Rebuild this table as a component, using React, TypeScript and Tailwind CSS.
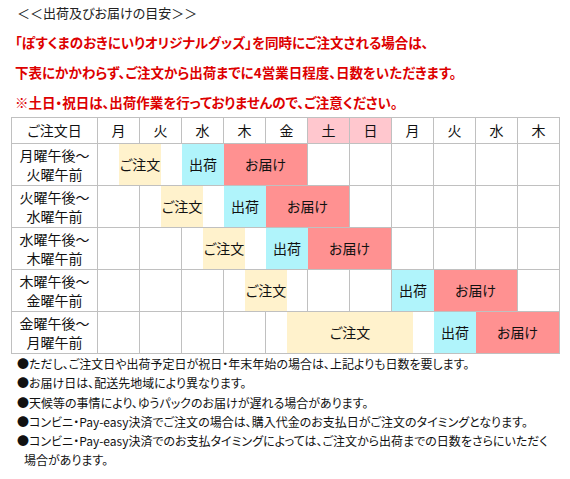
const days = ["月", "火", "水", "木", "金", "土", "日", "月", "火", "水", "木"];

type Kind = "order" | "ship" | "deliver";
type Seg = { n: 1 | 2 | 4 | 6; kind?: Kind; r?: boolean };

const widths = { 1: "w-[21px]", 2: "w-[42px]", 4: "w-[84px]", 6: "w-[126px]" };

const kindStyle: Record<Kind, { bg: string; label: string }> = {
  order: { bg: "bg-[#fff2cc]", label: "ご注文" },
  ship: { bg: "bg-[#b0f4fb]", label: "出荷" },
  deliver: { bg: "bg-[#ff9191]", label: "お届け" },
};

const E: Seg = { n: 2, r: true };

const rows: { from: string; to: string; segs: Seg[] }[] = [
  {
    from: "月曜午後～",
    to: "火曜午前",
    segs: [{ n: 1 }, { n: 2, kind: "order" }, { n: 1 }, { n: 2, kind: "ship" }, { n: 4, kind: "deliver", r: true }, E, E, E, E, E, E],
  },
  {
    from: "火曜午後～",
    to: "水曜午前",
    segs: [E, { n: 1 }, { n: 2, kind: "order" }, { n: 1 }, { n: 2, kind: "ship" }, { n: 4, kind: "deliver", r: true }, E, E, E, E, E],
  },
  {
    from: "水曜午後～",
    to: "木曜午前",
    segs: [E, E, { n: 1 }, { n: 2, kind: "order" }, { n: 1 }, { n: 2, kind: "ship" }, { n: 4, kind: "deliver", r: true }, E, E, E, E],
  },
  {
    from: "木曜午後～",
    to: "金曜午前",
    segs: [E, E, E, { n: 1 }, { n: 2, kind: "order" }, { n: 1, r: true }, E, E, { n: 2, kind: "ship" }, { n: 4, kind: "deliver", r: true }, E],
  },
  {
    from: "金曜午後～",
    to: "月曜午前",
    segs: [E, E, E, E, { n: 1 }, { n: 6, kind: "order" }, { n: 1 }, { n: 2, kind: "ship" }, { n: 4, kind: "deliver", r: true }],
  },
];

const notes = [
  "●ただし、ご注文日や出荷予定日が祝日・年末年始の場合は、上記よりも日数を要します。",
  "●お届け日は、配送先地域により異なります。",
  "●天候等の事情により、ゆうパックのお届けが遅れる場合があります。",
  "●コンビニ・Pay-easy決済でご注文の場合は、購入代金のお支払日がご注文のタイミングとなります。",
];

function Cell({ seg }: { seg: Seg }) {
  const k = seg.kind ? kindStyle[seg.kind] : null;
  return (
    <div
      className={`${widths[seg.n]} shrink-0 flex items-center justify-center ${k ? k.bg : ""} ${
        seg.r ? "border-r border-[#c0c0c0]" : ""
      }`}
    >
      {k?.label}
    </div>
  );
}

export default function App() {
  return (
    <div className="w-[570px] h-[479px] bg-white overflow-hidden font-['Noto_Sans_CJK_JP',sans-serif] [font-feature-settings:'palt']">
      <div className="pl-[17px] pt-[3px] text-[13px] leading-[19px] text-[#222]">＜＜出荷及びお届けの目安＞＞</div>

      <div className="mt-[5px] pl-[15px] text-[13.5px] font-bold leading-[30px] text-[#dd0000]">
        <p>「ぽすくまのおきにいりオリジナルグッズ」を同時にご注文される場合は、</p>
        <p>下表にかかわらず、ご注文から出荷までに4営業日程度、日数をいただきます。</p>
        <p>※土日・祝日は、出荷作業を行っておりませんので、ご注意ください。</p>
      </div>

      <div className="ml-[11px] w-[549px] border-l border-t border-[#c0c0c0] text-[14px] text-[#111]">
        <div className="flex h-[26px] border-b border-[#c0c0c0]">
          <div className="w-[86px] shrink-0 flex items-center justify-center border-r border-[#c0c0c0]">ご注文日</div>
          {days.map((d, i) => (
            <div
              key={i}
              className={`w-[42px] shrink-0 flex items-center justify-center border-r border-[#c0c0c0] ${
                i === 5 || i === 6 ? "bg-[#ffc7ce]" : ""
              }`}
            >
              {d}
            </div>
          ))}
        </div>
        {rows.map((row) => (
          <div key={row.from} className="flex h-[42px] border-b border-[#c0c0c0]">
            <div className="w-[86px] shrink-0 flex flex-col items-center justify-center border-r border-[#c0c0c0] leading-[19px]">
              <span>{row.from}</span>
              <span>{row.to}</span>
            </div>
            {row.segs.map((s, i) => (
              <Cell key={i} seg={s} />
            ))}
          </div>
        ))}
      </div>

      <div className="pl-[17px] text-[12px] leading-[19.3px] text-[#111]">
        {notes.map((n) => (
          <p key={n}>{n}</p>
        ))}
        <p>●コンビニ・Pay-easy決済でのお支払タイミングによっては、ご注文から出荷までの日数をさらにいただく</p>
        <p className="pl-[7px]">場合があります。</p>
      </div>
    </div>
  );
}
